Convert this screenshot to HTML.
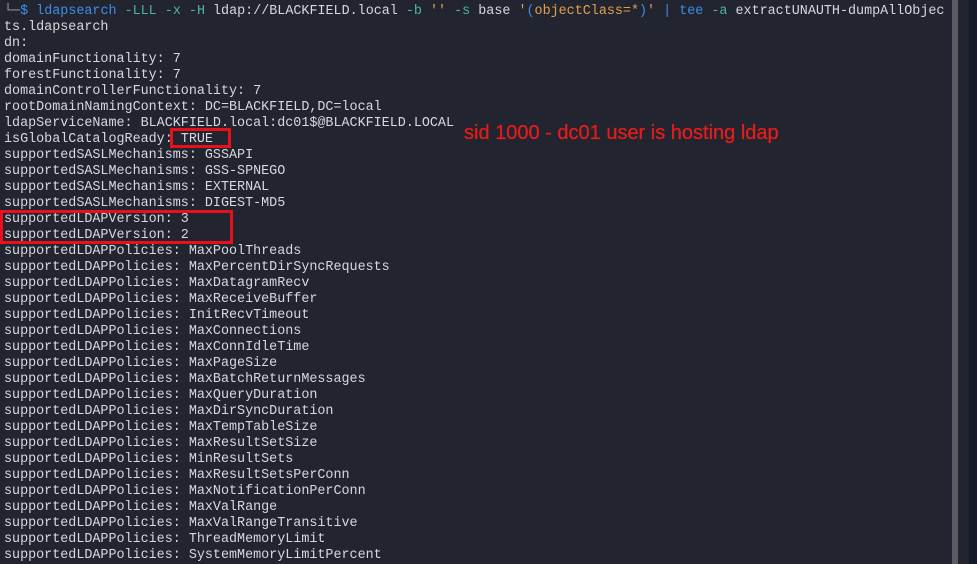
<!DOCTYPE html>
<html><head><style>
body{margin:0;width:977px;height:564px;overflow:hidden;background:#22252f;position:relative;}
pre{margin:0;position:absolute;left:4px;top:4px;font-family:"Liberation Mono","DejaVu Sans Mono",monospace;font-size:13.4px;line-height:16px;color:#d8d8dc;}
.b{color:#3d8ee8}.o{color:#e0a050}.t{color:#4fb3a3}.g{color:#a0a0a8}
.sb{position:absolute;left:952px;top:0;width:6px;height:564px;background:#5a5b60}
.rp{position:absolute;left:969px;top:0;width:8px;height:564px;background:#141a2a}
.box{position:absolute;border:3px solid #e8101a;box-sizing:border-box}
.note{position:absolute;left:464px;top:122px;font-family:"Liberation Sans",sans-serif;font-size:20px;color:#e41c1c;-webkit-text-stroke:0.3px #e41c1c}
</style></head><body>
<pre><span class="g">└─</span><span class="b">$</span> <span class="b">ldapsearch</span> <span class="t">-LLL</span> <span class="t">-x</span> <span class="t">-H</span> ldap://BLACKFIELD.local <span class="t">-b</span> <span class="o">''</span> <span class="t">-s</span> base <span class="o">'</span><span class="b">(</span><span class="o">objectClass=*</span><span class="b">)</span><span class="o">'</span> <span class="b">|</span> <span class="b">tee</span> <span class="t">-a</span> extractUNAUTH-dumpAllObjec
ts.ldapsearch
dn:
domainFunctionality: 7
forestFunctionality: 7
domainControllerFunctionality: 7
rootDomainNamingContext: DC=BLACKFIELD,DC=local
ldapServiceName: BLACKFIELD.local:dc01$@BLACKFIELD.LOCAL
isGlobalCatalogReady: TRUE
supportedSASLMechanisms: GSSAPI
supportedSASLMechanisms: GSS-SPNEGO
supportedSASLMechanisms: EXTERNAL
supportedSASLMechanisms: DIGEST-MD5
supportedLDAPVersion: 3
supportedLDAPVersion: 2
supportedLDAPPolicies: MaxPoolThreads
supportedLDAPPolicies: MaxPercentDirSyncRequests
supportedLDAPPolicies: MaxDatagramRecv
supportedLDAPPolicies: MaxReceiveBuffer
supportedLDAPPolicies: InitRecvTimeout
supportedLDAPPolicies: MaxConnections
supportedLDAPPolicies: MaxConnIdleTime
supportedLDAPPolicies: MaxPageSize
supportedLDAPPolicies: MaxBatchReturnMessages
supportedLDAPPolicies: MaxQueryDuration
supportedLDAPPolicies: MaxDirSyncDuration
supportedLDAPPolicies: MaxTempTableSize
supportedLDAPPolicies: MaxResultSetSize
supportedLDAPPolicies: MinResultSets
supportedLDAPPolicies: MaxResultSetsPerConn
supportedLDAPPolicies: MaxNotificationPerConn
supportedLDAPPolicies: MaxValRange
supportedLDAPPolicies: MaxValRangeTransitive
supportedLDAPPolicies: ThreadMemoryLimit
supportedLDAPPolicies: SystemMemoryLimitPercent</pre>
<div class="box" style="left:170px;top:128px;width:61px;height:20px"></div>
<div class="box" style="left:0;top:210px;width:233px;height:34px"></div>
<div class="note">sid 1000 - dc01 user is hosting ldap</div>
<div class="sb"></div><div class="rp"></div>
</body></html>
